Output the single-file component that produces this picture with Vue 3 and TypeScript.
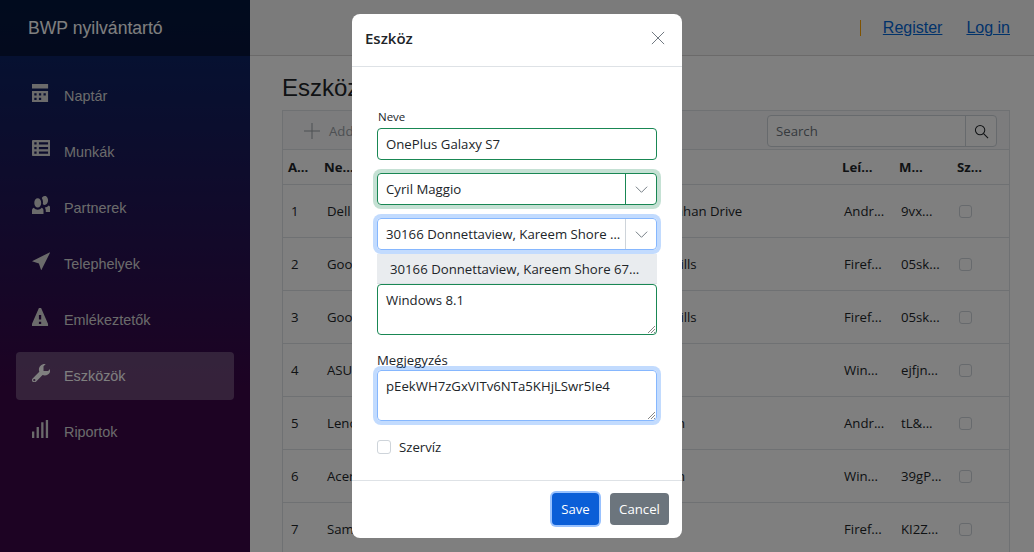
<script setup lang="ts">
import { ref } from "vue";

const navItems = [
	{ label: "Naptár", icon: "M0 0v2h7v-2h-7zm0 3v4.91c0 .05.04.09.09.09h6.81c.05 0 .09-.04.09-.09v-4.91h-7zm1 1h1v1h-1v-1zm2 0h1v1h-1v-1zm2 0h1v1h-1v-1zm-4 2h1v1h-1v-1zm2 0h1v1h-1v-1z" },
	{ label: "Munkák", icon: "M.5 0c-.28 0-.5.23-.5.5v6c0 .28.23.5.5.5h7c.28 0 .5-.22.5-.5v-6c0-.28-.22-.5-.5-.5h-7zm.5 1h1v1h-1v-1zm2 0h4v1h-4v-1zm-2 2h1v1h-1v-1zm2 0h4v1h-4v-1zm-2 2h1v1h-1v-1zm2 0h4v1h-4v-1z" },
	{ label: "Partnerek", icon: "M5.5 0c-.51 0-.95.35-1.22.88.32.53.5 1.16.5 1.84 0 .28-.03.54-.09.79.24.22.51.38.81.38.83 0 1.5-.9 1.5-2s-.67-2-1.5-2zm-3 1c-.83 0-1.5.9-1.5 2s.67 2 1.5 2 1.5-.9 1.5-2-.67-2-1.5-2zm4.75 3.16c-.43.51-1.02.82-1.69.84.27.38.44.84.44 1.34v.66h2v-1.66c0-.52-.31-.97-.75-1.19zm-6.5 1c-.44.22-.75.67-.75 1.19v1.66h5v-1.66c0-.52-.31-.97-.75-1.19-.45.53-1.06.84-1.75.84s-1.3-.32-1.75-.84z" },
	{ label: "Telephelyek", icon: "M8 0l-8 4 3 1 1 3 4-8z" },
	{ label: "Emlékeztetők", icon: "M3.09 0c-.06 0-.1.04-.13.09l-2.94 6.81c-.02.05-.03.13-.03.19v.81c0 .05.04.09.09.09h6.81c.05 0 .09-.04.09-.09v-.81c0-.05-.01-.14-.03-.19l-2.94-6.81c-.02-.05-.07-.09-.13-.09h-.81zm-.09 3h1v2h-1v-2zm0 3h1v1h-1v-1z" },
	{ label: "Eszközök", active: true, icon: "M5.5 0c-1.38 0-2.5 1.12-2.5 2.5 0 .32.08.62.19.91l-2.91 2.88c-.39.39-.39 1.05 0 1.44.2.2.46.28.72.28.26 0 .52-.09.72-.28l2.88-2.91c.28.11.58.19.91.19 1.38 0 2.5-1.12 2.5-2.5 0-.16 0-.32-.03-.47l-.97.97h-2v-2l.97-.97c-.15-.03-.31-.03-.47-.03zm-4.5 6.5c.28 0 .5.22.5.5s-.22.5-.5.5-.5-.22-.5-.5.22-.5.5-.5z" },
	{ label: "Riportok", icon: "M6 0v8h1v-8h-1zm-2 1v7h1v-7h-1zm-2 2v5h1v-5h-1zm-2 2v3h1v-3h-1z" },
];

const rows = [
	{ id: 1, name: "Dell", site: "41208 Port Ernestine Vista Ridge, 7731 Ellis Callahan Drive", desc: "Andr...", note: "9vx..." },
	{ id: 2, name: "Goo", site: "8854 New Alden Crossing Run, 1120 Oak Mills Hills", desc: "Firef...", note: "05sk..." },
	{ id: 3, name: "Goo", site: "8854 New Alden Crossing Run, 1120 Oak Mills Hills", desc: "Firef...", note: "05sk..." },
	{ id: 4, name: "ASU", site: "", desc: "Win...", note: "ejfjn..." },
	{ id: 5, name: "Leno", site: "5521 Lake Tomas Junction Way, 908 Ward Haven", desc: "Andr...", note: "tL&..." },
	{ id: 6, name: "Acer", site: "5521 Lake Tomas Junction Way, 908 Ward Haven", desc: "Win...", note: "39gP..." },
	{ id: 7, name: "Sam", site: "", desc: "Firef...", note: "KI2Z..." },
];

const deviceName = ref("OnePlus Galaxy S7");
const partner = ref("Cyril Maggio");
const address = ref("30166 Donnettaview, Kareem Shore 67512");
const description = ref("Windows 8.1");
const note = ref("pEekWH7zGxVITv6NTa5KHjLSwr5Ie4");
</script>

<template>
	<div class="page">
		<aside class="sidebar">
			<div class="brand">BWP nyilvántartó</div>
			<nav class="nav">
				<a v-for="item in navItems" :key="item.label" class="nav-link" :class="{ active: item.active }">
					<svg class="nav-icon" viewBox="0 0 8 8"><path :d="item.icon" /></svg>
					{{ item.label }}
				</a>
			</nav>
		</aside>

		<main class="main">
			<div class="top-row">
				<span class="divider"></span>
				<a class="top-link">Register</a>
				<a class="top-link">Log in</a>
			</div>
			<div class="content">
				<h1 class="title">Eszközök</h1>
				<div class="grid-box">
					<div class="toolbar">
						<span class="add">
							<svg class="add-icon" viewBox="0 0 16 16"><path d="M8 0v16M0 8h16" /></svg>
							Add
						</span>
						<div class="search">
							<span class="search-input">Search</span>
							<span class="search-btn">
								<svg viewBox="0 0 16 16" class="search-icon"><circle cx="6.5" cy="6.5" r="5" /><path d="M10.2 10.2 15 15" /></svg>
							</span>
						</div>
					</div>
					<div class="row head">
						<span>A...</span>
						<span>Ne...</span>
						<span></span>
						<span>Leí...</span>
						<span>M...</span>
						<span>Sz...</span>
					</div>
					<div v-for="row in rows" :key="row.id" class="row body">
						<span>{{ row.id }}</span>
						<span>{{ row.name }}</span>
						<span>{{ row.site }}</span>
						<span>{{ row.desc }}</span>
						<span>{{ row.note }}</span>
						<span><i class="table-check"></i></span>
					</div>
				</div>
			</div>
		</main>

		<div class="backdrop">
			<div class="modal">
				<header class="modal-head">
					<span class="modal-title">Eszköz</span>
					<svg class="close" viewBox="0 0 16 16"><path d="M1 1l14 14M15 1 1 15" /></svg>
				</header>
				<div class="modal-body">
					<label class="small-label">Neve</label>
					<div class="field valid">{{ deviceName }}</div>
					<div class="combo valid glow-green">
						<span class="combo-text">{{ partner }}</span>
						<span class="combo-btn"><svg viewBox="0 0 16 16"><path d="M2 5l6 6 6-6" /></svg></span>
					</div>
					<div class="combo-wrap">
						<div class="combo focus glow-blue">
							<span class="combo-text">{{ address }}</span>
							<span class="combo-btn"><svg viewBox="0 0 16 16"><path d="M2 5l6 6 6-6" /></svg></span>
						</div>
						<div class="dropdown"><span>{{ address }}</span></div>
					</div>
					<div class="area valid first-area">
						{{ description }}
						<svg class="grip" viewBox="0 0 10 10"><path d="M9 2 2 9M9 5 5 9M9 8 8 9" /></svg>
					</div>
					<label class="label">Megjegyzés</label>
					<div class="area focus glow-blue">
						{{ note }}
						<svg class="grip" viewBox="0 0 10 10"><path d="M9 2 2 9M9 5 5 9M9 8 8 9" /></svg>
					</div>
					<div class="check-row">
						<i class="check"></i>
						<span>Szervíz</span>
					</div>
				</div>
				<footer class="modal-foot">
					<button class="btn save">Save</button>
					<button class="btn cancel">Cancel</button>
				</footer>
			</div>
		</div>
	</div>
</template>

<style>
html,
body {
	margin: 0;
	overflow: hidden;
}
</style>

<style scoped>
.page {
	position: relative;
	display: flex;
	width: 1034px;
	height: 552px;
	overflow: hidden;
	background: #fff;
	font-family: "Liberation Sans", Arial, sans-serif;
}

.sidebar {
	width: 250px;
	flex: none;
	background-image: linear-gradient(180deg, rgb(5, 39, 103) 0%, #3a0647 70%);
}
.brand {
	height: 56px;
	box-sizing: border-box;
	padding: 0 28px;
	display: flex;
	align-items: center;
	background: rgba(0, 0, 0, 0.4);
	color: #fff;
	font-size: 17.6px;
}
.nav {
	display: flex;
	flex-direction: column;
	padding-top: 16px;
}
.nav-link {
	display: flex;
	align-items: center;
	height: 48px;
	margin: 0 16px 8px;
	padding-left: 16px;
	border-radius: 4px;
	color: #d7d7d7;
	font-size: 14.4px;
}
.nav-link.active {
	background: rgba(255, 255, 255, 0.25);
	color: #fff;
}
.nav-icon {
	width: 18.4px;
	height: 18.4px;
	margin-right: 13.6px;
	margin-top: -6px;
	fill: currentColor;
	flex: none;
}

.main {
	flex: 1;
	min-width: 0;
}
.top-row {
	height: 56px;
	box-sizing: border-box;
	display: flex;
	align-items: center;
	justify-content: flex-end;
	gap: 24px;
	padding-right: 24px;
	background: #f7f7f7;
	border-bottom: 1px solid #d6d5d5;
}
.top-link {
	color: #0366d6;
	font-size: 16px;
	text-decoration: underline;
}
.divider {
	width: 1px;
	height: 16px;
	margin-right: -2px;
	background: #ffa400;
}
.content {
	padding: 16px 24px 0 32px;
	font-family: "Open Sans", "Noto Sans", sans-serif;
}
.title {
	margin: 0 0 6px;
	font-family: "Liberation Sans", Arial, sans-serif;
	font-size: 24px;
	font-weight: 400;
	line-height: 32px;
	color: #212529;
}
.grid-box {
	border: 1px solid #dee2e6;
	border-bottom: none;
}
.toolbar {
	display: flex;
	align-items: center;
	justify-content: space-between;
	height: 36px;
	padding: 2px 12px 0 21px;
	background: #f8f9fa;
	border-bottom: 1px solid #dee2e6;
}
.add {
	display: flex;
	align-items: center;
	gap: 9px;
	color: #9aa0a6;
	font-size: 13.2px;
}
.add-icon {
	width: 16px;
	height: 16px;
	fill: none;
	stroke: #9aa0a6;
	stroke-width: 1;
}
.search {
	display: flex;
	width: 230px;
	height: 32px;
	box-sizing: border-box;
	border: 1px solid #ced4da;
	border-radius: 4px;
	background: #fff;
}
.search-input {
	flex: 1;
	padding-left: 8px;
	line-height: 30px;
	color: #6c757d;
	font-size: 13.2px;
}
.search-btn {
	width: 31px;
	box-sizing: border-box;
	border-left: 1px solid #ced4da;
	display: flex;
	align-items: center;
	justify-content: center;
}
.search-icon {
	width: 15px;
	height: 15px;
	fill: none;
	stroke: #212529;
	stroke-width: 1.1;
}
.row {
	display: grid;
	grid-template-columns: 36px 60px 1fr 57px 58px 57px;
	align-items: center;
	border-bottom: 1px solid #dee2e6;
	font-size: 13.2px;
	color: #212529;
}
.head {
	height: 35px;
	font-weight: 700;
	box-sizing: border-box;
}
.head span {
	padding-left: 5px;
}
.body {
	height: 53px;
	box-sizing: border-box;
}
.body span {
	padding-left: 8px;
	white-space: nowrap;
}
.body span:nth-child(n + 4) {
	padding-left: 7px;
}
.table-check {
	display: block;
	width: 13px;
	height: 13px;
	box-sizing: border-box;
	border: 1px solid #ced4da;
	border-radius: 3px;
	background: #fff;
}

.backdrop {
	position: absolute;
	inset: 0;
	background: rgba(0, 0, 0, 0.5);
	display: flex;
	justify-content: center;
	padding-top: 14px;
}
.modal {
	width: 330px;
	height: 524px;
	box-sizing: border-box;
	background: #fff;
	border-radius: 8px;
	display: flex;
	flex-direction: column;
	font-family: "Open Sans", "Noto Sans", sans-serif;
	color: #212529;
	font-size: 13.2px;
}
.modal-head {
	height: 53px;
	flex: none;
	box-sizing: border-box;
	display: flex;
	align-items: center;
	justify-content: space-between;
	padding: 0 17px 5px 13px;
	border-bottom: 1px solid #dee2e6;
}
.modal-title {
	font-size: 15px;
	font-weight: 600;
}
.close {
	width: 14px;
	height: 14px;
	fill: none;
	stroke: #6c757d;
	stroke-width: 1.1;
}
.modal-body {
	flex: 1;
	padding: 42px 25px 0 25px;
	display: flex;
	flex-direction: column;
}
.small-label {
	font-size: 11.5px;
	line-height: 15px;
	margin-bottom: 4px;
	padding-left: 1px;
}
.label {
	line-height: 17px;
	margin-top: 17px;
	height: 18px;
}
.field,
.combo {
	height: 32px;
	box-sizing: border-box;
	border: 1px solid #ced4da;
	border-radius: 4px;
	line-height: 30px;
	padding-left: 8px;
}
.combo {
	display: flex;
	padding-left: 0;
	margin-top: 13px;
}
.combo-wrap {
	position: relative;
}
.combo-text {
	flex: 1;
	min-width: 0;
	padding: 0 2px 0 8px;
	white-space: nowrap;
	overflow: hidden;
	text-overflow: ellipsis;
}
.combo-btn {
	width: 30px;
	flex: none;
	border-left: 1px solid #ced4da;
	display: flex;
	align-items: center;
	justify-content: center;
}
.combo-btn svg {
	width: 15px;
	height: 15px;
	fill: none;
	stroke: #6c757d;
	stroke-width: 1;
}
.dropdown {
	position: absolute;
	left: 0;
	right: 0;
	top: 49px;
	height: 30px;
	box-sizing: border-box;
	padding: 0 16px 0 13px;
	background: #e9ecef;
	line-height: 30px;
	border-bottom: 1px solid #dee2e6;
	z-index: 1;
}
.dropdown span {
	display: block;
	white-space: nowrap;
	overflow: hidden;
	text-overflow: ellipsis;
}
.area {
	position: relative;
	height: 51px;
	box-sizing: border-box;
	border: 1px solid #ced4da;
	border-radius: 4px;
	padding: 5px 8px;
	line-height: 20px;
}
.first-area {
	margin-top: 34px;
}
.valid {
	border-color: #198754;
}
.valid .combo-btn {
	border-left-color: #198754;
}
.focus {
	border-color: #86b7fe;
}
.glow-green {
	box-shadow: 0 0 0 4px rgba(25, 135, 84, 0.25);
}
.glow-blue {
	box-shadow: 0 0 0 4px rgba(13, 110, 253, 0.25);
}
.grip {
	position: absolute;
	right: 0;
	bottom: 0;
	width: 10px;
	height: 10px;
	fill: none;
	stroke: #555;
	stroke-width: 0.7;
}
.check-row {
	display: flex;
	align-items: center;
	gap: 8px;
	margin-top: 17px;
}
.check {
	display: block;
	width: 14px;
	height: 14px;
	box-sizing: border-box;
	border: 1px solid #ced4da;
	border-radius: 3px;
}
.modal-foot {
	height: 58px;
	flex: none;
	box-sizing: border-box;
	border-top: 1px solid #dee2e6;
	display: flex;
	justify-content: flex-end;
	align-items: center;
	gap: 11px;
	padding: 0 13px 1px;
}
.btn {
	height: 32px;
	border: none;
	border-radius: 4px;
	color: #fff;
	font: inherit;
	padding: 0;
}
.save {
	width: 47px;
	background: #0b5ed7;
	box-shadow: 0 0 0 2px rgba(49, 132, 253, 0.5);
}
.cancel {
	width: 59px;
	background: #6c757d;
}
</style>
